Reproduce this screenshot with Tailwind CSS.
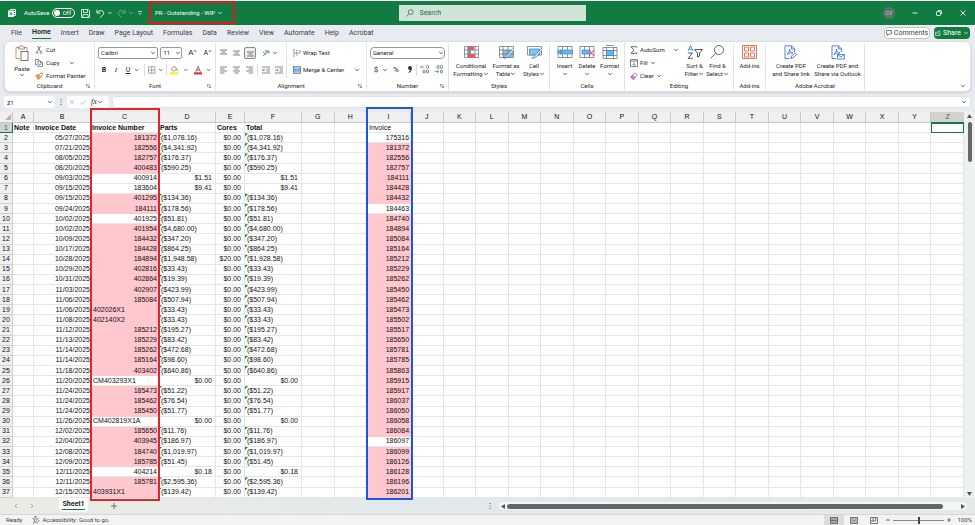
<!DOCTYPE html>
<html lang="en">
<head>
  <meta charset="UTF-8" />
  <meta name="viewport" content="width=device-width, initial-scale=1.0" />
  <title>PR - Outstanding - WIP</title>
  <script src="https://cdn.jsdelivr.net/npm/@tailwindcss/browser@4"></script>
</head>
<body class="h-screen flex flex-col overflow-hidden bg-[#e8ecf1] text-[#262626] text-[7px] leading-[8px] font-[Roboto,sans-serif]">
  <!-- Shared icons -->
  <svg class="hidden">
    <symbol id="chev" viewBox="0 0 6 4"><path d="M1.200 1l1.800 1.800L4.800 1" fill="none" stroke="currentColor" stroke-width=".7" /></symbol>
    <symbol id="launch" viewBox="0 0 6 6"><path d="M.5 4.500V.5H5M2.500 2.500L5 5M5.200 2.500V5.200H2.500" fill="none" stroke="currentColor" stroke-width=".7" /></symbol>
  </svg>

  <!-- Title bar -->
  <header class="h-[25px] shrink-0 flex items-start bg-[#107c41] text-white border-t border-white text-[6px]">
    <div class="flex items-center h-6 w-[149px] pl-2">
      <svg class="w-2 h-2 mr-2" viewBox="0 0 8 8" fill="none" stroke="#fff" stroke-width=".9"><rect x=".5" y="2" width="5" height="5.500" fill="#fff" /><path d="M2.500 1.500V.5h5v6H6M5.500 2.500h2M5.500 4.500h2" /><path d="M2 3.500l2 2.500M4 3.500L2 6" stroke="#107c41" /></svg>
      <label for="autosave" class="w-7">AutoSave</label>
      <span class="relative flex items-center">
        <input id="autosave" type="checkbox" class="appearance-none w-[23px] h-[10px] rounded-full border border-white" />
        <span class="absolute left-0.5 top-0.5 size-1.5 rounded-full bg-white"></span>
        <span class="absolute right-1 top-px">Off</span>
      </span>
      <button aria-label="Save" class="ml-1.5"><svg class="size-[9px]" viewBox="0 0 9 9" fill="none" stroke="#fff" stroke-width=".8"><path d="M.5.5h7l1 1v7h-8zM2.500.5v3h4v-3M2 8.500V5.500h5v3" /></svg></button>
      <button aria-label="Undo" class="ml-1.5"><svg class="size-[9px]" viewBox="0 0 9 9" fill="none" stroke="#fff" stroke-width=".9"><path d="M1 .8v3.200h3.200M1.200 3.800C3 1.500 5.200.8 6.800 2.200c1.500 1.400 1 3-.3 4.200L4.200 8.500" /></svg></button>
      <svg class="w-1.5 h-1 ml-0.5"><use href="#chev" /></svg>
      <button aria-label="Redo" class="ml-1 opacity-40"><svg class="size-[9px]" viewBox="0 0 9 9" fill="none" stroke="#fff" stroke-width=".9"><path d="M8 .8v3.200H4.800M7.800 3.800C6 1.500 3.800.8 2.200 2.200c-1.500 1.400-1 3 .3 4.200l2.300 2.100" /></svg></button>
      <svg class="w-1.5 h-1 ml-0.5 opacity-40"><use href="#chev" /></svg>
      <svg class="w-1 h-1.5 ml-1" viewBox="0 0 4 6" fill="none" stroke="#fff" stroke-width=".7"><path d="M0 1.500h4M.5 3l1.500 1.500L3.500 3" /></svg>
    </div>
    <button class="flex items-center gap-0.5 h-[23px] w-[86px] shrink-0 border-2 border-[#e5191c] pl-1 whitespace-nowrap">PR - Outstanding - WIP <svg class="w-1.5 h-1"><use href="#chev" /></svg></button>
    <div class="flex-3"></div>
    <div class="mt-1 w-[187px] h-4 flex items-center bg-[#cfe3d8] text-[#1d6b42] pl-[7px] gap-1.5 text-[7px]">
      <svg class="size-2" viewBox="0 0 8 8" fill="none" stroke="#1d6b42" stroke-width=".7"><circle cx="4.800" cy="3" r="2.400" /><path d="M3.100 4.700L.5 7.500" /></svg>
      <input aria-label="Search" placeholder="Search" class="flex-1 outline-none placeholder:text-[#1d6b42]" />
    </div>
    <div class="flex-7 flex items-center justify-end h-6 pr-2">
      <span class="size-3 rounded-full bg-[#59746a] text-[#d3dcd8] text-[5px] flex items-center justify-center mr-4">CV</span>
      <button aria-label="Minimize" class="mr-4"><svg class="size-2" viewBox="0 0 8 8"><path d="M1.500 4h5" stroke="#fff" stroke-width=".8" /></svg></button>
      <button aria-label="Restore" class="mr-4"><svg class="size-2" viewBox="0 0 8 8" fill="none" stroke="#fff" stroke-width=".8"><rect x="1.500" y="2.500" width="4" height="4" rx=".6" /><path d="M3 1.500h2.500q1 0 1 1V5" /></svg></button>
      <button aria-label="Close"><svg class="size-2" viewBox="0 0 8 8"><path d="M1.500 1.500l5 5M6.500 1.500l-5 5" stroke="#fff" stroke-width=".8" /></svg></button>
    </div>
  </header>

  <!-- Tabs -->
  <nav class="h-4 shrink-0 flex items-center gap-[10px] pl-[11px] pr-[5px] text-[#3c3c3c]">
    <a href="#">File</a>
    <a href="#" class="font-semibold text-[#222] border-b border-[#107c41] mt-px pb-0.5">Home</a>
    <a href="#">Insert</a>
    <a href="#">Draw</a>
    <a href="#">Page Layout</a>
    <a href="#">Formulas</a>
    <a href="#">Data</a>
    <a href="#">Review</a>
    <a href="#">View</a>
    <a href="#">Automate</a>
    <a href="#">Help</a>
    <a href="#">Acrobat</a>
    <div class="ml-auto flex gap-1">
      <button class="h-3 w-[46px] rounded-sm border border-[#c4c4c4] bg-white flex items-center justify-center gap-0.5"><svg class="size-1.5" viewBox="0 0 6 6" fill="none" stroke="#333" stroke-width=".6"><path d="M.5.5h5v3.500H3L1.500 5.500V4h-1z" /></svg>Comments</button>
      <button class="h-3 w-9 rounded-sm bg-[#107c41] text-white flex items-center justify-center gap-0.5"><svg class="size-1.5" viewBox="0 0 6 6" fill="none" stroke="#fff" stroke-width=".6"><path d="M2 2H.5v3.500h4.500V4M1.800 4c0-1.500 1-2 2.200-2V.6l1.700 1.900L4 4.200V3" /></svg>Share<svg class="w-1.5 h-1"><use href="#chev" /></svg></button>
    </div>
  </nav>

  <!-- Ribbon -->
  <section class="h-[51px] shrink-0 mx-1 flex bg-white rounded-md border border-[#dcdfe3] shadow-sm py-px text-[6px]">
    <div class="w-[90px] shrink-0 flex flex-col border-r border-[#e1e1e1]">
      <div class="flex-1 flex">
        <button class="w-[30px] pl-1 flex flex-col items-center pt-0.5">
          <svg class="w-[14px] h-4" viewBox="0 0 14 16" fill="none"><path d="M4 2.500H1v11h4M9 2.500h3V6" stroke="#e0944a" /><path d="M3.500 4V2h1.500q.2-1.500 1.500-1.500T8 2h1.500v2z" fill="#fff" stroke="#777" stroke-width=".8" /><rect x="6" y="6.500" width="7" height="9" fill="#fff" stroke="#666" stroke-width=".9" /></svg>
          <span class="mt-1">Paste</span>
          <svg class="w-1.5 h-1"><use href="#chev" /></svg>
        </button>
        <div class="flex flex-col">
          <button class="h-[13px] flex items-center gap-[3px]"><svg class="size-2" viewBox="0 0 8 8" fill="none" stroke-width=".7"><path d="M2.500 0l3 5.500M5.500 0l-3 5.500" stroke="#444" /><circle cx="2" cy="6.500" r="1" stroke="#2b7cd3" /><circle cx="6" cy="6.500" r="1" stroke="#2b7cd3" /></svg>Cut</button>
          <button class="h-[13px] flex items-center gap-[3px]"><svg class="size-2" viewBox="0 0 8 8" fill="none" stroke="#555" stroke-width=".7"><path d="M2 6H.5V.5h3.500V1.500M3 2h2.500L7.500 4v3.600H3zM5.500 2v2h2" /><path d="M4 5.500h2" stroke="#2b7cd3" /></svg>Copy<svg class="w-1.5 h-1 ml-1.5"><use href="#chev" /></svg></button>
          <button class="h-[13px] flex items-center gap-[3px]"><svg class="size-2" viewBox="0 0 8 8"><path d="M.5 3.500L4 2.500l2 2.500L3.500 7.800z" fill="#f09a4e" stroke="#d5702a" stroke-width=".6" /><path d="M4 2.500L7 .5l.7 1.200L6 5" fill="#fff" stroke="#555" stroke-width=".6" /></svg>Format Painter</button>
        </div>
      </div>
      <div class="flex items-center justify-center relative"><span>Clipboard</span><svg class="size-1 absolute right-1"><use href="#launch" /></svg></div>
    </div>

    <div class="w-[121px] shrink-0 flex flex-col border-r border-[#e1e1e1]">
      <div class="flex-1 flex flex-col px-[3px]">
        <div class="h-[19px] flex items-center gap-0.5">
          <label class="relative w-[61px] h-3 flex"><select aria-label="Font" class="appearance-none w-full pl-0.5 border border-[#9a9a9a] rounded-xs"><option>Calibri</option></select><svg class="w-1.5 h-1 absolute right-0.5 top-1"><use href="#chev" /></svg></label>
          <label class="relative w-[22px] h-3 flex"><select aria-label="Font size" class="appearance-none w-full pl-0.5 border border-[#9a9a9a] rounded-xs"><option>11</option></select><svg class="w-1.5 h-1 absolute right-px top-1"><use href="#chev" /></svg></label>
          <button class="text-[8px] ml-1 flex">A<svg class="w-1 h-1" viewBox="0 0 4 4"><path d="M.5 3L2 1l1.500 2" fill="none" stroke="#2b7cd3" stroke-width=".8" /></svg></button>
          <button class="ml-1 text-[7px] flex">A<svg class="w-1 h-1" viewBox="0 0 4 4"><path d="M.5 1L2 3l1.500-2" fill="none" stroke="#2b7cd3" stroke-width=".8" /></svg></button>
        </div>
        <div class="h-[15px] flex items-center text-[7px]">
          <button class="w-[13px] font-bold">B</button>
          <button class="w-[13px] italic font-['Liberation_Serif',serif]">I</button>
          <button class="w-[13px] underline">U</button>
          <svg class="w-1.5 h-1"><use href="#chev" /></svg>
          <span class="w-px h-3 bg-[#ddd] mx-1"></span>
          <svg class="size-2" viewBox="0 0 8 8" fill="none" stroke="#666" stroke-width=".6"><path d="M.5.5h7v7h-7zM4 .5v7M.5 4h7" /></svg>
          <svg class="w-1.5 h-1 ml-0.5"><use href="#chev" /></svg>
          <span class="w-px h-3 bg-[#ddd] mx-[3px]"></span>
          <svg class="w-[9px] h-[10px]" viewBox="0 0 9 10"><path d="M1.500 4l3-3 2.500 2.500-3 3zM7 3.500q1.500 1.500 1 2.500" fill="none" stroke="#444" stroke-width=".7" /><path d="M0 7.500h9v2.300H0z" fill="#ffee00" /></svg>
          <svg class="w-1.5 h-1 ml-1"><use href="#chev" /></svg>
          <svg class="w-[9px] h-[10px] ml-1.5" viewBox="0 0 9 10"><path d="M2 7l2.500-6L7 7M3 5h3" fill="none" stroke="#444" stroke-width=".8" /><path d="M0 7.500h9v2.300H0z" fill="#e8262a" /></svg>
          <svg class="w-1.5 h-1 ml-1"><use href="#chev" /></svg>
        </div>
      </div>
      <div class="flex items-center justify-center relative"><span>Font</span><svg class="size-1 absolute right-1"><use href="#launch" /></svg></div>
    </div>

    <div class="w-[151px] shrink-0 flex flex-col border-r border-[#e1e1e1]">
      <div class="flex-1 flex">
        <div class="w-[71px] pl-1 border-r border-[#e1e1e1] mb-1">
          <div class="h-[19px] flex items-center">
            <svg class="w-[7px] h-2" viewBox="0 0 7 8" stroke="#444" stroke-width=".7"><path d="M0 1h7M1.500 3h4M0 5h7" /></svg>
            <svg class="w-[7px] h-2 ml-1.5" viewBox="0 0 7 8" stroke="#444" stroke-width=".7"><path d="M0 2h7M1.500 4h4M0 6h7" /></svg>
            <span class="ml-1 size-3 border border-[#8a8a8a] bg-[#ececec] rounded-xs flex items-center justify-center"><svg class="w-[7px] h-2" viewBox="0 0 7 8" stroke="#444" stroke-width=".7"><path d="M0 3h7M1.500 5h4M0 7h7" /></svg></span>
            <svg class="size-2 ml-1.5" viewBox="0 0 8 8" fill="none" stroke-width=".8"><path d="M1 7l6-5M7 4.500V2H4.500" stroke="#2b7cd3" /><path d="M1 2.500l2.500 3M3 1l2.500 3" stroke="#555" /></svg>
            <svg class="w-1.5 h-1 ml-0.5"><use href="#chev" /></svg>
          </div>
          <div class="h-[15px] flex items-center">
            <svg class="w-[7px] h-2" viewBox="0 0 7 8" stroke="#555" stroke-width=".7"><path d="M0 1h7M0 3h4.500M0 5h7M0 7h4.500" /></svg>
            <svg class="w-[7px] h-2 ml-1.5" viewBox="0 0 7 8" stroke="#555" stroke-width=".7"><path d="M0 1h7M1.500 3h4M0 5h7M1.500 7h4" /></svg>
            <svg class="w-[7px] h-2 ml-1.5" viewBox="0 0 7 8" stroke="#555" stroke-width=".7"><path d="M0 1h7M2.500 3H7M0 5h7M2.500 7H7" /></svg>
            <span class="w-px h-3 bg-[#ddd] mx-1"></span>
            <svg class="w-2 h-2" viewBox="0 0 8 8" stroke="#555" stroke-width=".7" fill="none"><path d="M0 1h8M4.500 3H8M4.500 5H8M0 7h8" /><path d="M3.500 4H.5M1.700 2.800L.5 4l1.200 1.200" stroke="#2b7cd3" /></svg>
            <svg class="w-2 h-2 ml-[5px]" viewBox="0 0 8 8" stroke="#555" stroke-width=".7" fill="none"><path d="M0 1h8M4.500 3H8M4.500 5H8M0 7h8" /><path d="M0 4h3M1.800 2.800L3 4 1.800 5.200" stroke="#2b7cd3" /></svg>
          </div>
        </div>
        <div class="flex-1 pl-1.5">
          <button class="h-[19px] flex items-center gap-0.5"><svg class="size-2" viewBox="0 0 8 8" fill="none" stroke-width=".7"><path d="M1 0v8M3 1.500h1.500M3 6h1.500" stroke="#666" /><path d="M2.500 4H6q1.500 0 1.500-1.200T6 1.500M4 2.800L2.700 4 4 5.200" stroke="#2b7cd3" /></svg>Wrap Text</button>
          <button class="h-[15px] flex items-center gap-0.5"><svg class="size-2" viewBox="0 0 8 8" fill="none" stroke-width=".7"><rect x=".5" y=".5" width="7" height="7" stroke="#666" /><rect x=".5" y="2" width="7" height="4" fill="#bfe0f7" stroke="#2b7cd3" /><path d="M1.500 4h5M2.500 3l-1 1 1 1M5.500 3l1 1-1 1" stroke="#2b7cd3" /></svg>Merge &amp; Center<svg class="w-1.5 h-1 ml-2"><use href="#chev" /></svg></button>
        </div>
      </div>
      <div class="flex items-center justify-center relative"><span>Alignment</span><svg class="size-1 absolute right-1"><use href="#launch" /></svg></div>
    </div>

    <div class="w-[82px] shrink-0 flex flex-col border-r border-[#e1e1e1]">
      <div class="flex-1 flex flex-col px-[3px]">
        <div class="h-[19px] flex items-center"><label class="relative w-full h-3 flex"><select aria-label="Number format" class="appearance-none w-full pl-0.5 border border-[#9a9a9a] rounded-sm"><option>General</option></select><svg class="w-1.5 h-1 absolute right-px top-1"><use href="#chev" /></svg></label></div>
        <div class="h-[15px] flex items-center text-[8px]">
          <button class="w-3">$</button>
          <svg class="w-1.5 h-1"><use href="#chev" /></svg>
          <button class="w-4">%</button>
          <button class="w-3" aria-label="Comma style"><svg class="w-1.5 h-2 mx-auto" viewBox="0 0 6 8"><path d="M1 2a2 2 0 0 1 4 0q0 3-3 5l-.5-.6Q3 5 3 4 1 4 1 2z" fill="#333" /></svg></button>
          <span class="w-px h-3 bg-[#ddd] mr-[3px]"></span>
          <svg class="w-[9px] h-[9px]" viewBox="0 0 9 9" fill="none" stroke="#666" stroke-width=".8"><path d="M4.500 2H.5M2 .5L.5 2 2 3.500" stroke="#2b9be0" /><rect x="6.500" y=".5" width="2" height="3" rx="1" /><rect x="3" y="5" width="2" height="3" rx="1" /><rect x="6.500" y="5" width="2" height="3" rx="1" /></svg>
          <svg class="w-[9px] h-[9px] ml-[5px]" viewBox="0 0 9 9" fill="none" stroke="#666" stroke-width=".8"><path d="M.5 6.500h4M3 5l1.500 1.500L3 8" stroke="#2b9be0" /><rect x="3" y=".5" width="2" height="3" rx="1" /><rect x="6.500" y=".5" width="2" height="3" rx="1" /><rect x="6.500" y="5" width="2" height="3" rx="1" /></svg>
        </div>
      </div>
      <div class="flex items-center justify-center relative"><span>Number</span><svg class="size-1 absolute right-1"><use href="#launch" /></svg></div>
    </div>

    <div class="w-[101px] shrink-0 flex flex-col border-r border-[#e1e1e1]">
      <div class="flex-1 flex justify-center pt-0.5">
        <button class="w-[38px] flex flex-col items-center">
          <svg class="w-[15px] h-[14px]" viewBox="0 0 15 14" fill="none"><path d="M.5 1.500h14v11H.5zM4 1.500v11M11 1.500v11M.5 5h14M.5 9h14" stroke="#666" stroke-width=".7" /><path d="M3.500 1.500H10V5H3.500zM3.500 9h7.500v3.500H3.500z" fill="#f0545a" /><path d="M3.500 5h3.500v4H3.500z" fill="#4aa3e0" /></svg>
          <span class="mt-[3px] whitespace-nowrap">Conditional</span><span class="flex items-center">Formatting<svg class="w-1.5 h-1"><use href="#chev" /></svg></span>
        </button>
        <button class="w-8 flex flex-col items-center">
          <svg class="w-[15px] h-[14px]" viewBox="0 0 15 14" fill="none"><path d="M4 5h10v7.500H4z" fill="#83c3ee" /><path d="M.5 1.500h14v11H.5zM4 1.500v11M9 1.500v11M.5 5h14M.5 9h14" stroke="#666" stroke-width=".7" /><path d="M14.500 3L8 10.500l-3 3 4-1.500L15 5" fill="#fff" stroke="#2b7cd3" stroke-width=".8" /></svg>
          <span class="mt-[3px] whitespace-nowrap">Format as</span><span class="flex items-center">Table<svg class="w-1.5 h-1"><use href="#chev" /></svg></span>
        </button>
        <button class="w-6 flex flex-col items-center">
          <svg class="w-[15px] h-[14px]" viewBox="0 0 15 14" fill="none"><path d="M.5 1.500h14v8.500H.5z" stroke="#666" stroke-width=".7" /><path d="M2.500 4h10v6h-10z" fill="#83c3ee" stroke="#2b7cd3" stroke-width=".7" /><path d="M14.500 3L8 10.500l-3 3 4-1.500L15 5" fill="#fff" stroke="#2b7cd3" stroke-width=".8" /></svg>
          <span class="mt-[3px]">Cell</span><span class="flex items-center">Styles<svg class="w-1.5 h-1"><use href="#chev" /></svg></span>
        </button>
      </div>
      <div class="text-center">Styles</div>
    </div>

    <div class="w-[75px] shrink-0 flex flex-col border-r border-[#e1e1e1]">
      <div class="flex-1 flex justify-center pt-0.5">
        <button class="w-[22px] flex flex-col items-center">
          <svg class="w-4 h-[14px]" viewBox="0 0 16 14" fill="none"><path d="M1 1.500h14v11H1zM5.500 1.500v11M10.500 1.500v11" stroke="#666" stroke-width=".7" /><path d="M3 5h12.500v4H3z" fill="#6bb5ea" stroke="#2b8ad6" stroke-width=".7" /><path d="M6 7H.8M3 4.500L.5 7 3 9.500" stroke="#2b8ad6" /></svg>
          <span class="mt-[3px]">Insert</span><svg class="w-1.5 h-1 mt-0.5"><use href="#chev" /></svg>
        </button>
        <button class="w-[23px] flex flex-col items-center">
          <svg class="w-4 h-[14px]" viewBox="0 0 16 14" fill="none"><path d="M1 1.500h14v11H1zM5.500 1.500v11M10.500 1.500v11" stroke="#666" stroke-width=".7" /><path d="M3 5h8v4H3z" fill="#6bb5ea" stroke="#2b8ad6" stroke-width=".7" /><path d="M10 5l5 6M15 5l-5 6" stroke="#e8363b" /></svg>
          <span class="mt-[3px]">Delete</span><svg class="w-1.5 h-1 mt-0.5"><use href="#chev" /></svg>
        </button>
        <button class="w-[22px] flex flex-col items-center">
          <svg class="w-4 h-[14px]" viewBox="0 0 16 14" fill="none"><path d="M1 2.500h14v11H1zM4.500 2.500v11M11.500 2.500v11M1 5.500h14M1 10.500h14" stroke="#666" stroke-width=".7" /><path d="M4.500 5.500h7v5h-7z" fill="#6bb5ea" stroke="#2b8ad6" stroke-width=".7" /><path d="M4 .5h8" stroke="#2b8ad6" stroke-width=".8" /></svg>
          <span class="mt-[3px]">Format</span><svg class="w-1.5 h-1 mt-0.5"><use href="#chev" /></svg>
        </button>
      </div>
      <div class="text-center">Cells</div>
    </div>

    <div class="w-[109px] shrink-0 flex flex-col border-r border-[#e1e1e1]">
      <div class="flex-1 flex pl-[5px]">
        <div class="w-[53px]">
          <button class="h-[13px] flex items-center gap-0.5"><svg class="size-2" viewBox="0 0 8 8" fill="none" stroke="#444" stroke-width=".8"><path d="M6.800 1.500V.7H1l3 3.300-3 3.300h5.800v-.8" /></svg>AutoSum<svg class="w-1.5 h-1 ml-1.5"><use href="#chev" /></svg></button>
          <button class="h-[13px] flex items-center gap-0.5"><svg class="size-2" viewBox="0 0 8 8" fill="none" stroke-width=".7"><path d="M.5.5h7v7h-7zM.5 2h7" stroke="#555" /><path d="M4 2.500v4M2.500 5L4 6.500 5.500 5" stroke="#2b7cd3" /></svg>Fill<svg class="w-1.5 h-1"><use href="#chev" /></svg></button>
          <button class="h-[13px] flex items-center gap-0.5"><svg class="size-2" viewBox="0 0 8 8" fill="none" stroke="#a34fb5" stroke-width=".8"><path d="M.8 5L5 .8l2.400 2.400L3.200 7.400z" /><path d="M.8 5l1.800-1.800L5 5.600 3.200 7.400z" fill="#c98ad6" /></svg>Clear<svg class="w-1.5 h-1"><use href="#chev" /></svg></button>
        </div>
        <button class="w-[23px] flex flex-col items-center pt-0.5">
          <svg class="w-4 h-[14px]" viewBox="0 0 16 14" fill="none" stroke-width=".9"><path d="M1 6L3.500.5 6 6M2 4.200h3" stroke="#2b8ad6" /><path d="M1.200 8h4.300L1 13.300h4.800" stroke="#444" /><path d="M7.500 4.500h8l-3 3.500v3l-2 1V8z" stroke="#444" /></svg>
          <span class="mt-[3px] whitespace-nowrap">Sort &amp;</span><span class="flex items-center">Filter<svg class="w-1.5 h-1"><use href="#chev" /></svg></span>
        </button>
        <button class="w-[23px] flex flex-col items-center pt-0.5">
          <svg class="w-4 h-[14px]" viewBox="0 0 16 14" fill="none" stroke="#444" stroke-width=".8"><circle cx="9" cy="5" r="4.500" /><path d="M5.800 8.200L.8 13.200" /></svg>
          <span class="mt-[3px] whitespace-nowrap">Find &amp;</span><span class="flex items-center">Select<svg class="w-1.5 h-1"><use href="#chev" /></svg></span>
        </button>
      </div>
      <div class="text-center">Editing</div>
    </div>

    <div class="w-8 shrink-0 flex flex-col border-r border-[#e1e1e1]">
      <button class="flex-1 flex flex-col items-center pt-0.5">
        <svg class="w-[15px] h-[14px]" viewBox="0 0 15 14" fill="none" stroke="#e0694b" stroke-width=".9"><path d="M.5.5h14v13H.5z" /><path d="M2.500 2h4v4h-4zM8.500 2h4v4h-4zM2.500 8h4v4h-4zM8.500 8h4v4h-4z" /></svg>
        <span class="mt-[3px]">Add-ins</span>
      </button>
      <div class="text-center">Add-ins</div>
    </div>

    <div class="w-[99px] shrink-0 flex flex-col border-r border-[#e1e1e1]">
      <div class="flex-1 flex justify-center pt-0.5">
        <button class="w-[45px] flex flex-col items-center">
          <svg class="w-[14px] h-[15px]" viewBox="0 0 14 15" fill="none" stroke="#3f78e0" stroke-width=".9"><path d="M5 13.500H1V.8h6.500L10.500 4v3M7.500.8V4h3M3 9.500q3-2.500 2.500-5.500Q6 8 9 7.800 5 7.800 3 9.500" /><path d="M7 11.500l3.500-3q1.500-.5 2 1l-3.500 3.500q-2 1-2-1.500zM6 13.800l2-1.500" /></svg>
          <span class="mt-0.5 whitespace-nowrap">Create PDF</span><span class="whitespace-nowrap">and Share link</span>
        </button>
        <button class="w-[48px] flex flex-col items-center">
          <svg class="w-[14px] h-[15px]" viewBox="0 0 14 15" fill="none" stroke="#3f78e0" stroke-width=".9"><path d="M5 13.500H1V.8h6.500L10.500 4v3M7.500.8V4h3M3 9.500q3-2.500 2.500-5.500Q6 8 9 7.800 5 7.800 3 9.500" /><path d="M6.500 9.500h6.800v4.500H6.500zM6.500 9.500l3.400 2.500 3.400-2.500" /></svg>
          <span class="mt-0.5 whitespace-nowrap">Create PDF and</span><span class="whitespace-nowrap">Share via Outlook</span>
        </button>
      </div>
      <div class="text-center">Adobe Acrobat</div>
    </div>
    <button aria-label="Collapse ribbon" class="ml-auto self-end mr-1 mb-0.5"><svg class="w-1.5 h-1"><use href="#chev" /></svg></button>
  </section>

  <!-- Formula bar -->
  <section class="h-5 shrink-0 flex items-center gap-[5px] px-1">
    <label class="relative flex"><input aria-label="Name box" value="Z1" class="w-[51px] h-3 bg-white rounded-sm pl-[3px] text-[6px]" /><svg class="w-1.5 h-1 absolute right-0.5 top-1"><use href="#chev" /></svg></label>
    <svg class="w-0.5 h-1.5" viewBox="0 0 2 6" fill="#555"><path d="M.5 0h1v1h-1zM.5 2.500h1v1h-1zM.5 5h1v1h-1z" /></svg>
    <div class="flex items-center gap-[5px] bg-white h-3 rounded-sm px-0.5 w-[42px]">
      <svg class="size-1.5 shrink-0" viewBox="0 0 6 6"><path d="M.5.5l5 5M5.500.5l-5 5" stroke="#b5b5b5" stroke-width=".7" /></svg>
      <svg class="size-1.5 shrink-0" viewBox="0 0 6 6"><path d="M.5 3.500l1.500 2L5.500 1" fill="none" stroke="#b5b5b5" stroke-width=".7" /></svg>
      <button class="italic text-[8px] font-['Liberation_Serif',serif] flex items-center">fx<svg class="w-1.5 h-1"><use href="#chev" /></svg></button>
    </div>
    <label class="relative flex flex-1 -ml-0.5"><input aria-label="Formula" class="w-full h-3 bg-white rounded-sm px-1 border border-[#e0e3e6]" /><svg class="w-1.5 h-1 absolute right-1 top-1"><use href="#chev" /></svg></label>
  </section>

  <!-- Sheet -->
  <main class="flex-1 min-h-0 flex">
    <div class="relative flex-1">
      <table class="w-full h-full table-fixed border-separate border-spacing-0 bg-white font-['Liberation_Sans',sans-serif] leading-[8px] text-[#111]">
        <colgroup id="cols"></colgroup>
        <thead><tr id="head" class="h-[11px]"></tr></thead>
        <tbody id="rows"></tbody>
      </table>
      <!-- Column highlights -->
      <div class="absolute -top-1 -bottom-[3px] left-[90px] w-[70px] border-2 border-[#e0262b] z-10"></div>
      <div class="absolute -top-[5px] -bottom-0.5 left-[366px] w-[47px] border-2 border-[#1d57e0] z-10"></div>
    </div>
    <div class="w-[11px] flex flex-col items-center bg-[#eef1f2] py-0.5">
      <svg class="w-[5px] h-1" viewBox="0 0 5 4"><path d="M0 4L2.500 0 5 4z" fill="#555" /></svg>
      <span class="w-1 h-10 rounded-full bg-[#666] mt-1"></span>
      <svg class="w-[5px] h-1 mt-auto" viewBox="0 0 5 4"><path d="M0 0h5L2.500 4z" fill="#555" /></svg>
    </div>
  </main>

  <!-- Sheet tabs -->
  <section class="h-4 shrink-0 flex items-center bg-linear-to-r from-[#ebebe3] via-[#e1e9ec] to-[#e4ebe5]">
    <button aria-label="Previous sheet" class="ml-[13px]"><svg class="w-1.5 h-1.5" viewBox="0 0 6 6"><path d="M4 1L2 3l2 2" fill="none" stroke="#999" stroke-width=".8" /></svg></button>
    <button aria-label="Next sheet" class="ml-[10px]"><svg class="w-1.5 h-1.5" viewBox="0 0 6 6"><path d="M2 1l2 2-2 2" fill="none" stroke="#999" stroke-width=".8" /></svg></button>
    <a href="#" class="ml-6 w-[29px] h-[14px] self-start bg-white rounded-b-sm flex justify-center font-bold"><span class="border-b border-[#107c41] h-3 pt-0.5">Sheet1</span></a>
    <button aria-label="New sheet" class="ml-[23px]"><svg class="w-1.5 h-1.5" viewBox="0 0 6 6"><path d="M3 0v6M0 3h6" stroke="#555" stroke-width=".8" /></svg></button>
    <svg class="w-0.5 h-1.5 ml-[372px]" viewBox="0 0 2 6" fill="#555"><path d="M.5 0h1v1h-1zM.5 2.500h1v1h-1zM.5 5h1v1h-1z" /></svg>
    <div class="flex-1 ml-2 mr-2 h-2 rounded-full bg-[#f4f6f6] flex items-center px-0.5">
      <svg class="w-1 h-[5px]" viewBox="0 0 4 5"><path d="M4 0v5L0 2.500z" fill="#555" /></svg>
      <span class="flex-1 h-[5px] rounded-full bg-[#666] ml-0.5 mr-[18px]"></span>
      <svg class="w-1 h-[5px]" viewBox="0 0 4 5"><path d="M0 0v5l4-2.500z" fill="#555" /></svg>
    </div>
  </section>

  <!-- Status bar -->
  <footer class="h-[11px] shrink-0 flex items-center bg-[#f3f3f3] border-t border-[#d4d9d8] pl-1.5 pr-[3px] text-[6px] text-[#444]">
    <span>Ready</span>
    <svg class="size-2 ml-[10px] mr-0.5" viewBox="0 0 8 8" fill="none" stroke="#444" stroke-width=".7"><circle cx="3.500" cy="1" r=".8" /><path d="M.5 2.500l2 .7v2L1.500 7.800M6.500 2.500l-2 .7v1.500M3.500 5.500l1 1.500 3-3" /></svg>
    <span>Accessibility: Good to go</span>
    <span class="ml-auto w-5 h-[10px] bg-[#dcdcdc] flex items-center justify-center"><svg class="w-2 h-[7px]" viewBox="0 0 8 7" fill="none" stroke="#444" stroke-width=".7"><path d="M.5.5h7v6h-7zM.5 2h7M.5 3.500h7M.5 5h7" /></svg></span>
    <svg class="w-2 h-[7px] ml-1.5" viewBox="0 0 8 7" fill="none" stroke="#444" stroke-width=".7"><path d="M.5.5h7v6h-7zM2 .5v6M6 .5v6M3 2h2M3 3.500h2M3 5h2" /></svg>
    <svg class="w-2 h-[7px] ml-3" viewBox="0 0 8 7" fill="none" stroke="#444" stroke-width=".7"><path d="M.5.5h7v6h-7zM3 .5v3.500H.5M5.500.5v3.500H3" /></svg>
    <button class="ml-2" aria-label="Zoom out"><svg class="size-1" viewBox="0 0 4 4"><path d="M0 2h4" stroke="#444" stroke-width=".8" /></svg></button>
    <input type="range" aria-label="Zoom" value="50" class="appearance-none w-[51px] mx-[3px] h-[7px] bg-transparent [&::-webkit-slider-runnable-track]:h-px [&::-webkit-slider-runnable-track]:bg-[#8a8a8a] [&::-webkit-slider-thumb]:appearance-none [&::-webkit-slider-thumb]:w-0.5 [&::-webkit-slider-thumb]:h-[7px] [&::-webkit-slider-thumb]:-mt-[3px] [&::-webkit-slider-thumb]:bg-[#444]" />
    <button aria-label="Zoom in"><svg class="size-1" viewBox="0 0 4 4"><path d="M0 2h4M2 0v4" stroke="#444" stroke-width=".7" /></svg></button>
    <span class="ml-1.5">100%</span>
  </footer>

  <script>
    // date, invoice number, highlighted, parts, cores, total, second list, highlighted
    const data = [
      ["05/27/2025", "181372", 1, "($1,078.16)", "$0.00", "($1,078.16)", "175316", 0],
      ["07/21/2025", "182556", 1, "($4,341.92)", "$0.00", "($4,341.92)", "181372", 1],
      ["08/05/2025", "182757", 1, "($176.37)", "$0.00", "($176.37)", "182556", 1],
      ["08/20/2025", "400483", 1, "($590.25)", "$0.00", "($590.25)", "182757", 1],
      ["09/03/2025", "400914", 0, "$1.51", "$0.00", "$1.51", "184111", 1],
      ["09/15/2025", "183604", 0, "$9.41", "$0.00", "$9.41", "184428", 1],
      ["09/15/2025", "401295", 1, "($134.36)", "$0.00", "($134.36)", "184432", 1],
      ["09/24/2025", "184111", 1, "($178.56)", "$0.00", "($178.56)", "184463", 0],
      ["10/02/2025", "401925", 0, "($51.81)", "$0.00", "($51.81)", "184740", 1],
      ["10/02/2025", "401954", 1, "($4,680.00)", "$0.00", "($4,680.00)", "184894", 1],
      ["10/09/2025", "184432", 1, "($347.20)", "$0.00", "($347.20)", "185084", 1],
      ["10/17/2025", "184428", 1, "($864.25)", "$0.00", "($864.25)", "185164", 1],
      ["10/28/2025", "184894", 1, "($1,948.58)", "$20.00", "($1,928.58)", "185212", 1],
      ["10/29/2025", "402816", 1, "($33.43)", "$0.00", "($33.43)", "185229", 1],
      ["10/31/2025", "402864", 1, "($19.39)", "$0.00", "($19.39)", "185262", 1],
      ["11/03/2025", "402907", 1, "($423.99)", "$0.00", "($423.99)", "185450", 1],
      ["11/06/2025", "185084", 1, "($507.94)", "$0.00", "($507.94)", "185462", 1],
      ["11/06/2025", "402026X1", 1, "($33.43)", "$0.00", "($33.43)", "185473", 1],
      ["11/08/2025", "402140X2", 1, "($33.43)", "$0.00", "($33.43)", "185502", 1],
      ["11/12/2025", "185212", 1, "($195.27)", "$0.00", "($195.27)", "185517", 1],
      ["11/13/2025", "185229", 1, "($83.42)", "$0.00", "($83.42)", "185650", 1],
      ["11/14/2025", "185262", 1, "($472.68)", "$0.00", "($472.68)", "185781", 1],
      ["11/14/2025", "185164", 1, "($98.60)", "$0.00", "($98.60)", "185785", 1],
      ["11/18/2025", "403402", 1, "($640.86)", "$0.00", "($640.86)", "185863", 1],
      ["11/20/2025", "CM403293X1", 0, "$0.00", "$0.00", "$0.00", "185915", 1],
      ["11/24/2025", "185473", 1, "($51.22)", "$0.00", "($51.22)", "185917", 1],
      ["11/24/2025", "185462", 1, "($76.54)", "$0.00", "($76.54)", "186037", 1],
      ["11/24/2025", "185450", 1, "($51.77)", "$0.00", "($51.77)", "186050", 1],
      ["11/26/2025", "CM402819X1A", 0, "$0.00", "$0.00", "$0.00", "186058", 1],
      ["12/02/2025", "185650", 1, "($11.76)", "$0.00", "($11.76)", "186084", 1],
      ["12/04/2025", "403945", 1, "($186.97)", "$0.00", "($186.97)", "186097", 0],
      ["12/08/2025", "184740", 1, "($1,019.97)", "$0.00", "($1,019.97)", "186099", 1],
      ["12/09/2025", "185785", 1, "($51.45)", "$0.00", "($51.45)", "186126", 1],
      ["12/11/2025", "404214", 0, "$0.18", "$0.00", "$0.18", "186128", 1],
      ["12/11/2025", "185781", 1, "($2,595.36)", "$0.00", "($2,595.36)", "186196", 1],
      ["12/15/2025", "403931X1", 1, "($139.42)", "$0.00", "($139.42)", "186201", 1],
    ];

    const letters = "ABCDEFGHIJKLMNOPQRSTUVWXYZ".split("");
    const widths = { A: 21, B: 57, C: 68, D: 57, E: 29, F: 57, I: 44 };
    const plain = "border-r border-b border-[#e6e6e6]";
    const pink = "bg-[#ffc7ce] border-r border-b border-[#ffc7ce]";
    const flag = '<span class="absolute left-0 top-0 size-[3px] bg-[#12862f] [clip-path:polygon(0_0,100%_0,0_100%)]"></span>';

    document.getElementById("cols").innerHTML =
      '<col style="width:13px">' + letters.map(l => widths[l] ? `<col style="width:${widths[l]}px">` : "<col>").join("");

    document.getElementById("head").innerHTML =
      '<th class="bg-[#f0f0f0] border-r border-b border-[#c8c8c8]"><span class="block ml-auto mr-px size-1.5 bg-[#b5b5b5] [clip-path:polygon(100%_0,100%_100%,0_100%)]"></span></th>' +
      letters.map(l => l === "Z"
        ? '<th class="p-0 font-normal bg-[#d2d2d2] text-[#107c41] border-b border-[#107c41]">Z</th>'
        : `<th class="p-0 font-normal bg-[#f0f0f0] border-r border-b border-[#c8c8c8]">${l}</th>`).join("");

    function money(value) {
      return value.startsWith("(")
        ? `<td class="relative p-0 pl-0.5 ${plain}">${flag}${value}</td>`
        : `<td class="p-0 pr-[3px] text-right ${plain}">${value}</td>`;
    }

    function invoice(value, hit) {
      const align = /X/.test(value) ? "pl-0.5 text-left" : "pr-px text-right";
      return `<td class="p-0 ${align} ${hit ? pink : plain}">${value}</td>`;
    }

    const blank = n => `<td class="p-0 ${plain}"></td>`.repeat(n);
    const title = t => `<th class="p-0 pl-px text-left whitespace-nowrap ${plain}">${t}</th>`;

    let html = '<tr><th class="p-0 font-normal bg-[#d2d2d2] text-[#107c41] border-r border-b border-[#107c41]">1</th>' +
      ["Note", "Invoice Date", "Invoice Number", "Parts", "Cores", "Total"].map(title).join("") +
      blank(2) + `<td class="p-0 pl-0.5 ${plain}">Invoice</td>` + blank(16) +
      '<td class="p-0 outline outline-[#107c41] -outline-offset-1"></td></tr>';

    data.forEach(([date, num, hit, parts, cores, total, other, otherHit], i) => {
      html += `<tr><th class="p-0 font-normal bg-[#f0f0f0] border-r border-b border-[#d0d0d0]">${i + 2}</th>` +
        blank(1) +
        `<td class="p-0 text-right ${plain}">${date}</td>` +
        invoice(num, hit) + money(parts) +
        `<td class="p-0 pr-[3px] text-right ${plain}">${cores}</td>` +
        money(total) + blank(2) + invoice(other, otherHit) + blank(17) + "</tr>";
    });
    document.getElementById("rows").innerHTML = html;
  </script>
</body>
</html>
